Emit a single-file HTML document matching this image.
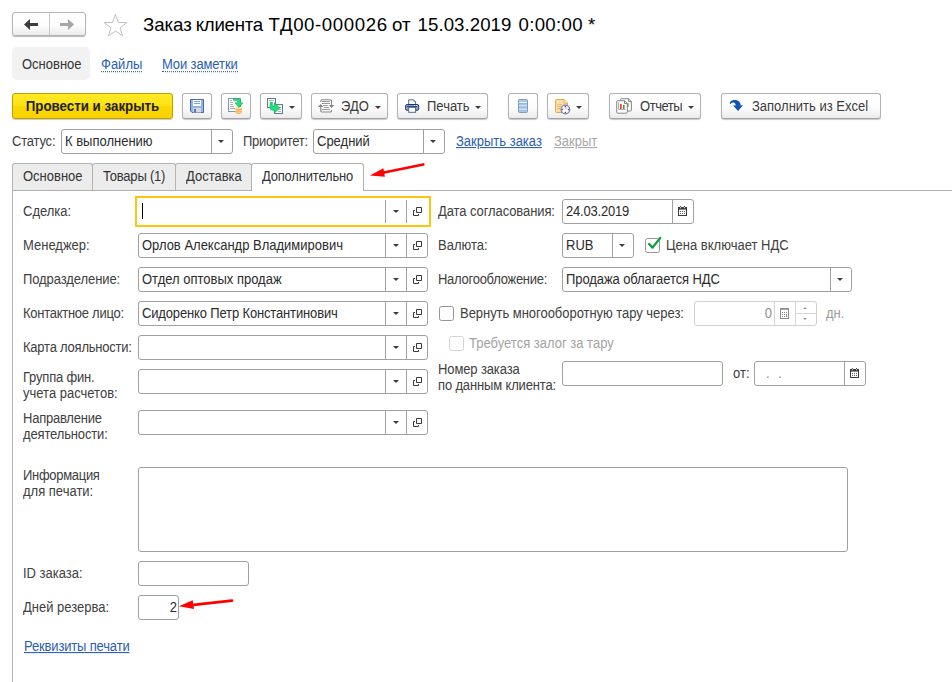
<!DOCTYPE html>
<html lang="ru"><head><meta charset="utf-8"><title>Заказ клиента</title>
<style>
html,body{margin:0;padding:0;background:#fff}
body{width:952px;height:682px;position:relative;overflow:hidden;font-family:"Liberation Sans",sans-serif;font-size:13px;color:#404040;}
.a{position:absolute;white-space:nowrap}
.t{position:absolute;white-space:nowrap;line-height:16px;height:16px;transform:scaleY(1.07);transform-origin:0 12.5px}
.btn{position:absolute;box-sizing:border-box;height:26px;top:93px;border:1px solid #b2b2b2;border-bottom-color:#a2a2a2;border-radius:3px;background:linear-gradient(#ffffff 0%,#fdfdfd 55%,#ebebeb 100%);box-shadow:0 1px 1px rgba(0,0,0,.22)}
.btn .t{top:5px;color:#3a3a3a}
.dd{position:absolute;width:0;height:0;border-left:3px solid transparent;border-right:3px solid transparent;border-top:3.5px solid #3c3c3c}
.inp{position:absolute;box-sizing:border-box;height:25px;border:1px solid #a0a0a0;border-radius:3px;background:#fff}
.inp .v{position:absolute;left:3px;top:4px;line-height:16px;white-space:nowrap;color:#2c2c2c;transform:scaleY(1.07);transform-origin:0 12.5px}
.inp .sep{position:absolute;top:0;bottom:0;width:1px;background:#a0a0a0}
.lnk{color:#2a5db0;text-decoration:underline}
.tab{position:absolute;box-sizing:border-box;top:163px;height:27px;border:1px solid #b5b5b5;border-bottom:none;border-radius:3px 3px 0 0;background:#ececec}
.tab .t{top:5px;left:10px;color:#333}

.inp.ref::before{content:"";position:absolute;left:246px;top:0;bottom:0;width:1px;background:#a0a0a0}
.inp.ref::after{content:"";position:absolute;left:267px;top:0;bottom:0;width:1px;background:#a0a0a0}
.cb{width:15px;height:15px;box-sizing:border-box;border:1px solid #969696;border-radius:2.5px;background:#fff}
.cb.dis{border-color:#d4d4d4}
.inp.dis{border-color:#d0d0d0}
.inp.dis .sep{background:#d6d6d6}
</style></head><body>

<!-- nav buttons -->
<div class="a" id="nav" style="left:12px;top:12px;width:74px;height:24px;box-sizing:border-box;border:1px solid #b4b4b4;border-radius:3px;background:linear-gradient(#fff,#fdfdfd 55%,#ececec);box-shadow:0 1px 1px rgba(0,0,0,.28)">
 <div class="a" style="left:36px;top:0;width:1px;height:22px;background:#c8c8c8"></div>
 <svg class="a" style="left:11px;top:6px" width="14" height="11" viewBox="0 0 14 11"><path d="M0 5.5 L6 0 V4 H14 V7 H6 V11Z" fill="#3c3c3c"/></svg>
 <svg class="a" style="left:47px;top:6px" width="14" height="11" viewBox="0 0 14 11"><path d="M14 5.5 L8 0 V4 H0 V7 H8 V11Z" fill="#a6a6a6"/></svg>
</div>
<svg class="a" id="star" style="left:103px;top:13px" width="25" height="24" viewBox="0 0 27 26"><path d="M13.5 1.5 L16.6 10.2 L25.8 10.4 L18.5 16 L21.1 24.8 L13.5 19.6 L5.9 24.8 L8.5 16 L1.2 10.4 L10.4 10.2Z" fill="#fff" stroke="#bdbdbd" stroke-width="1.05"/></svg>
<div class="a" id="title" style="left:0;top:14px;font-size:18.67px;line-height:22px;color:#000;height:22px;width:700px"><span class="a tw" id="tw0" style="left:142.9px;letter-spacing:0.00px">Заказ</span> <span class="a tw" id="tw1" style="left:195.8px;letter-spacing:-0.30px">клиента</span> <span class="a tw" id="tw2" style="left:268.6px;letter-spacing:0.58px">ТД00-000026</span> <span class="a tw" id="tw3" style="left:392.0px;letter-spacing:0.00px">от</span> <span class="a tw" id="tw4" style="left:417.6px;letter-spacing:0.05px">15.03.2019</span> <span class="a tw" id="tw5" style="left:518.6px;letter-spacing:0.28px">0:00:00</span> <span class="a tw" id="tw6" style="left:588.0px;letter-spacing:0.00px">*</span></div>

<!-- section links -->
<div class="a" style="left:12px;top:47px;width:78px;height:33px;background:#f2f2f2;border-radius:5px"></div>
<div class="t" id="s1" style="left:22px;top:57px;color:#333">Основное</div>
<div class="t" id="s2" style="left:101px;top:57px;color:#2a5db0;border-bottom:1px dotted #2a5db0;height:14px;line-height:15px">Файлы</div>
<div class="t" id="s3" style="letter-spacing:-0.12px;left:162px;top:57px;color:#2a5db0;border-bottom:1px dotted #2a5db0;height:14px;line-height:15px">Мои заметки</div>

<!-- toolbar -->
<div class="btn" id="b0" style="left:12px;width:161px;border-color:#bfa000;background:linear-gradient(#ffe924 0%,#ffe316 50%,#fbd900 52%,#f8d200 100%);"><div class="t" style="left:0;right:0;text-align:center;font-weight:bold;font-size:13.33px;color:#222">Провести и закрыть</div></div>
<div class="btn" id="b1" style="left:182px;width:30px"><svg class="a" style="left:7px;top:5px" width="14" height="14" viewBox="0 0 14 14"><path d="M0.5 0.5 H13.5 V13.5 H2 L0.5 12Z" fill="#8fb5e4" stroke="#4f66ad"/><rect x="3" y="1" width="8" height="6" fill="#fff"/><path d="M4 2.5h6M4 4.5h6" stroke="#7ba3d6"/><rect x="3" y="9" width="8" height="4.5" fill="#d9d9d9"/><rect x="4" y="10" width="2" height="3.5" fill="#4a78c0"/></svg></div>
<div class="btn" id="b2" style="left:221px;width:30px"><svg class="a" style="left:6px;top:4px" width="17" height="17" viewBox="0 0 17 17"><rect x="0.5" y="0.5" width="12" height="13" fill="#fff" stroke="#7a99b8"/><path d="M2 2.5h2M2 4.5h3M2 6.5h3M2 8.5h4M2 10.5h5" stroke="#a9b0b8"/><path d="M7.5 10 V14.6 C7.5 16.4 13.8 16.4 13.8 14.6 V10Z" fill="#f2a63a"/><ellipse cx="10.65" cy="10" rx="3.15" ry="1.2" fill="#fbe0a8"/><path d="M7.5 11.9 C7.5 13.2 13.8 13.2 13.8 11.9 M7.5 13.6 C7.5 14.9 13.8 14.9 13.8 13.6" fill="none" stroke="#fde6b8" stroke-width="0.9"/><path d="M5.5 0.5 H10 C12.2 0.5 13 2.2 13 4.9 H15 L10.8 9.4 L7 4.7 H9.7 C9.7 3.2 9.4 2.6 8.4 2.6 H5.5 Z" fill="#22de7c" stroke="#0a9a40" stroke-width="0.5" stroke-linejoin="round"/></svg></div>
<div class="btn" id="b3" style="left:260px;width:42px"><svg class="a" style="left:5px;top:3px" width="18" height="18" viewBox="266 97 18 18"><rect x="267.5" y="98.5" width="8" height="9" fill="#fff" stroke="#607a8e"/><path d="M269 100.5h4.7" stroke="#b0b6bc"/><rect x="274.5" y="104.5" width="8" height="9" fill="#fff" stroke="#607a8e"/><path d="M278 107.5h3M278.5 109.5h2.5M278 111.5h3" stroke="#b0b6bc"/><path d="M270 102.2 H272.4 V106 H274.3 V102.6 L279.8 108 L274.3 113.2 V110.2 H272.5 C271 110.2 270 109.2 270 107.7 Z" fill="#22de7c" stroke="#0a9a40" stroke-width="0.5" stroke-linejoin="round"/></svg><div class="dd" style="left:28px;top:12px"></div></div>
<div class="btn" id="b4" style="left:311px;width:77px"><svg class="a" style="left:5px;top:4px" width="18" height="16" viewBox="317 98 18 16"><g fill="none" stroke="#858585" stroke-width="1.1"><path d="M320.8 102 V101 a1.2 1.2 0 0 1 1.2 -1.2 H330.3 a1.2 1.2 0 0 1 1.2 1.2 V105.4"/><path d="M320.8 106.5 V110.8 a1.2 1.2 0 0 0 1.2 1.2 H330.3 a1.2 1.2 0 0 0 1.2 -1.2 V110"/></g><path d="M322 101.5h8M322 103.5h8M323.3 105.5h4.4M323.8 107.5h5.2M322 109.5h8" stroke="#8c8c8c" stroke-width="0.9"/><path d="M317.9 106.9 L320.7 103.9 L323.4 106.9Z M328.9 105.1 H334.3 L331.6 108.1Z" fill="#858585"/></svg><div class="t" style="left:29px">ЭДО</div><div class="dd" style="left:63px;top:12px"></div></div>
<div class="btn" id="b5" style="left:397px;width:91px"><svg class="a" style="left:6px;top:4px" width="17" height="16" viewBox="404 98 17 16"><path d="M408.7 104.5 V99.8 H413.5 L415.6 101.9 V104.5Z" fill="#fff" stroke="#4f6e84"/><path d="M413.5 99.8 V101.9 H415.6Z" fill="#6f8ea4"/><rect x="405.6" y="104.5" width="13.1" height="5.8" rx="1.6" fill="#7fabd9" stroke="#2b2a6c"/><path d="M407 106.6h10" stroke="#2b2a6c" stroke-width="1"/><rect x="414" y="105.1" width="1" height="0.9" fill="#fff"/><rect x="416" y="105.1" width="1" height="0.9" fill="#fff"/><rect x="408.7" y="107.3" width="6.9" height="5" fill="#fff" stroke="#4f6e84"/></svg><div class="t" style="left:29px">Печать</div><div class="dd" style="left:77px;top:12px"></div></div>
<div class="btn" id="b6" style="left:508px;width:30px"><svg class="a" style="left:9px;top:5px" width="10" height="14" viewBox="0 0 10 14"><rect x="0.5" y="0.5" width="9" height="13" rx="1" fill="#a9c8e6" stroke="#7d9dc0"/><path d="M1 3.6h8M1 7h8M1 10.4h8" stroke="#eef5fb" stroke-width="1"/><path d="M1 4.5h8M1 7.9h8M1 11.3h8" stroke="#8fb2d6" stroke-width="0.8"/></svg></div>
<div class="btn" id="b7" style="left:547px;width:42px"><svg class="a" style="left:7px;top:5px" width="17" height="17" viewBox="0 0 17 17"><path d="M0.5 1.5 C0.5 1 1 0.5 1.5 0.5 H9 L12.5 4 V13.5 H1.5 C1 13.5 0.5 13 0.5 12.5Z" fill="#fbdfa6" stroke="#e3a84a"/><path d="M9 0.5 V4 H12.5" fill="#fdf0d4" stroke="#e3a84a"/><path d="M2.5 5.5h1.2M4.5 5.5h2M2.5 7.5h1M4.3 7.5h1.5M2.5 9.5h2.5" stroke="#eaa24a" stroke-width="0.9"/><circle cx="10.4" cy="10.5" r="4.3" fill="#f7fafd" stroke="#5a8ac0" stroke-width="1.2"/><path d="M10.4 10.5 L10.4 8 L12.6 8.8Z" fill="#a9c6e6"/><circle cx="10.4" cy="7.4" r="0.75" fill="#f01818"/><circle cx="10.4" cy="13.6" r="0.75" fill="#f01818"/><circle cx="7.3" cy="10.5" r="0.75" fill="#f01818"/><circle cx="13.5" cy="10.5" r="0.75" fill="#f01818"/></svg><div class="dd" style="left:28px;top:12px"></div></div>
<div class="btn" id="b8" style="left:609px;width:92px"><svg class="a" style="left:6px;top:4px" width="17" height="17" viewBox="616 98 17 17"><path d="M621.5 98.7 H628.5 L631.4 101.6 V110 a1 1 0 0 1 -1 1 H621.5 a1 1 0 0 1 -1 -1 V99.7 a1 1 0 0 1 1 -1Z" fill="#fff" stroke="#858585"/><path d="M628.5 98.7 V101.6 H631.4" fill="none" stroke="#858585"/><rect x="627" y="103" width="1.4" height="4" fill="#2e9e4a"/><rect x="628.4" y="103.5" width="0.7" height="3.5" fill="#b5b060"/><path d="M617.7 100.7 H624.5 L627.3 103.5 V112.2 a1 1 0 0 1 -1 1 H617.7 a1 1 0 0 1 -1 -1 V101.7 a1 1 0 0 1 1 -1Z" fill="#fff" stroke="#858585"/><path d="M624.5 100.7 V103.5 H627.3" fill="none" stroke="#858585"/><path d="M618.5 102.3 V109.5 H625.5" fill="none" stroke="#9a9a9a" stroke-width="0.8"/><rect x="620" y="104" width="1.8" height="5" fill="#ff4040"/><rect x="623" y="105" width="1.5" height="4" fill="#2e9e4a"/><rect x="624.5" y="105.3" width="0.6" height="3.7" fill="#b5b060"/></svg><div class="t" style="letter-spacing:-0.45px;left:30px">Отчеты</div><div class="dd" style="left:78px;top:12px"></div></div>
<div class="btn" id="b9" style="left:721px;width:160px"><svg class="a" style="left:6px;top:4px" width="16" height="15" viewBox="728 98 16 15"><path d="M729.9 104 C729.6 101.4 732 100 735 100 C738.6 100 740.6 102.5 740.7 105.4 L742.9 105.3 L738.1 111.1 L733 105.6 L735.7 105.5 C735.6 103.5 734.6 102.5 733.1 102.5 C731.6 102.5 730.9 103.3 730.7 104.1 Z" fill="#0d55b8"/></svg><div class="t" style="left:30px">Заполнить из Excel</div></div>

<!-- status row -->
<div class="t" style="letter-spacing:-0.2px;left:12px;top:134px">Статус:</div>
<div class="inp" id="i_st" style="left:61px;top:129px;width:172px"><div class="v">К выполнению</div><div class="sep" style="left:149px"></div><div class="dd" style="left:156px;top:10px"></div></div>
<div class="t" style="letter-spacing:-0.3px;left:243px;top:134px">Приоритет:</div>
<div class="inp" id="i_pr" style="left:313px;top:129px;width:132px"><div class="v">Средний</div><div class="sep" style="left:109px"></div><div class="dd" style="left:116px;top:10px"></div></div>
<div class="t lnk" style="left:456px;top:134px">Закрыть заказ</div>
<div class="t" style="left:554px;top:134px;color:#a8a8a8;text-decoration:underline">Закрыт</div>

<!-- tabs -->
<div class="a" style="left:12px;top:190px;width:940px;height:1px;background:#b0b0b0"></div>
<div class="a" style="left:12px;top:190px;width:1px;height:492px;background:#b0b0b0"></div>
<div class="tab" id="t1" style="left:12px;width:81px"><div class="t">Основное</div></div>
<div class="tab" id="t2" style="left:92px;width:84px"><div class="t" style="letter-spacing:-0.2px">Товары (1)</div></div>
<div class="tab" id="t3" style="left:175px;width:77px"><div class="t">Доставка</div></div>
<div class="tab" id="t4" style="left:251px;width:113px;background:#fff;height:28px;border-color:#b0b0b0"><div class="t" style="letter-spacing:-0.2px">Дополнительно</div></div>

<!-- red arrows -->
<svg class="a" style="left:360px;top:155px" width="80" height="40" viewBox="360 155 80 40"><path d="M423.3 164.4 L384 172.6" stroke="#f00" stroke-width="2.6" stroke-linecap="round" fill="none"/><path d="M369.9 175.4 L383.4 168.2 L384.9 176.8Z" fill="#f00"/></svg>
<svg class="a" style="left:175px;top:590px" width="70" height="30" viewBox="175 590 70 30"><path d="M232 600.6 L193.5 604.8" stroke="#f00" stroke-width="2.8" stroke-linecap="round" fill="none"/><path d="M179 606.3 L192.7 600.3 L194 609.1Z" fill="#f00"/></svg>

<!-- left column -->
<div class="t" id="l1" style="left:23px;top:204px">Сделка:</div>
<div class="a" id="f1" style="left:135px;top:196px;width:296px;height:31px;box-sizing:border-box;border:2px solid #fbc70e;background:#fff">
  <div class="a" style="left:5px;top:5px;width:1px;height:16px;background:#000"></div>
  <div class="a" style="left:248px;top:2px;width:1px;height:23px;background:#a0a0a0"></div>
  <div class="a" style="left:269px;top:2px;width:1px;height:23px;background:#a0a0a0"></div>
  <div class="dd" style="left:256px;top:12px"></div>
  <svg class="a op" style="left:276px;top:9px" width="9" height="9" viewBox="0 0 9 9"><path d="M3.5 0.5 H8.5 V5.5 H3.5Z M2 3.5 H0.5 V8.5 H5.5 V7" fill="none" stroke="#3a3a3a" stroke-width="1"/></svg>
</div>

<div class="t" id="l2" style="left:23px;top:238px">Менеджер:</div>
<div class="inp ref" id="f2" style="left:138px;top:233px;width:290px"><div class="dd" style="left:254px;top:10px"></div><svg class="a op" style="left:274px;top:7px" width="9" height="9" viewBox="0 0 9 9"><path d="M3.5 0.5 H8.5 V5.5 H3.5Z M2 3.5 H0.5 V8.5 H5.5 V7" fill="none" stroke="#3a3a3a" stroke-width="1"/></svg><div class="v">Орлов Александр Владимирович</div></div>
<div class="t" id="l3" style="letter-spacing:-0.09px;left:23px;top:272px">Подразделение:</div>
<div class="inp ref" id="f3" style="left:138px;top:267px;width:290px"><div class="dd" style="left:254px;top:10px"></div><svg class="a op" style="left:274px;top:7px" width="9" height="9" viewBox="0 0 9 9"><path d="M3.5 0.5 H8.5 V5.5 H3.5Z M2 3.5 H0.5 V8.5 H5.5 V7" fill="none" stroke="#3a3a3a" stroke-width="1"/></svg><div class="v">Отдел оптовых продаж</div></div>
<div class="t" id="l4" style="letter-spacing:-0.27px;left:23px;top:306px">Контактное лицо:</div>
<div class="inp ref" id="f4" style="left:138px;top:301px;width:290px"><div class="dd" style="left:254px;top:10px"></div><svg class="a op" style="left:274px;top:7px" width="9" height="9" viewBox="0 0 9 9"><path d="M3.5 0.5 H8.5 V5.5 H3.5Z M2 3.5 H0.5 V8.5 H5.5 V7" fill="none" stroke="#3a3a3a" stroke-width="1"/></svg><div class="v" style="letter-spacing:-0.15px">Сидоренко Петр Константинович</div></div>
<div class="t" id="l5" style="letter-spacing:-0.22px;left:23px;top:340px">Карта лояльности:</div>
<div class="inp ref" id="f5" style="left:138px;top:335px;width:290px"><div class="dd" style="left:254px;top:10px"></div><svg class="a op" style="left:274px;top:7px" width="9" height="9" viewBox="0 0 9 9"><path d="M3.5 0.5 H8.5 V5.5 H3.5Z M2 3.5 H0.5 V8.5 H5.5 V7" fill="none" stroke="#3a3a3a" stroke-width="1"/></svg></div>
<div class="t" id="l6" style="letter-spacing:-0.2px;left:23px;top:370px">Группа фин.</div>
<div class="t" id="l6b" style="left:23px;top:386px">учета расчетов:</div>
<div class="inp ref" id="f6" style="left:138px;top:369px;width:290px"><div class="dd" style="left:254px;top:10px"></div><svg class="a op" style="left:274px;top:7px" width="9" height="9" viewBox="0 0 9 9"><path d="M3.5 0.5 H8.5 V5.5 H3.5Z M2 3.5 H0.5 V8.5 H5.5 V7" fill="none" stroke="#3a3a3a" stroke-width="1"/></svg></div>
<div class="t" id="l7" style="letter-spacing:-0.23px;left:23px;top:411px">Направление</div>
<div class="t" id="l7b" style="letter-spacing:-0.15px;left:23px;top:427px">деятельности:</div>
<div class="inp ref" id="f7" style="left:138px;top:410px;width:290px"><div class="dd" style="left:254px;top:10px"></div><svg class="a op" style="left:274px;top:7px" width="9" height="9" viewBox="0 0 9 9"><path d="M3.5 0.5 H8.5 V5.5 H3.5Z M2 3.5 H0.5 V8.5 H5.5 V7" fill="none" stroke="#3a3a3a" stroke-width="1"/></svg></div>

<div class="t" id="l8" style="letter-spacing:-0.3px;left:23px;top:468px">Информация</div>
<div class="t" id="l8b" style="left:23px;top:484px">для печати:</div>
<div class="inp" id="f8" style="left:138px;top:467px;width:710px;height:85px"></div>
<div class="t" id="l9" style="left:23px;top:566px">ID заказа:</div>
<div class="inp" id="f9" style="left:138px;top:561px;width:111px"></div>
<div class="t" id="l10" style="left:23px;top:600px">Дней резерва:</div>
<div class="inp" id="f10" style="left:138px;top:595px;width:41px"><div class="v" style="left:auto;right:1px">2</div></div>
<div class="t lnk" id="l11" style="letter-spacing:-0.16px;left:24px;top:639px">Реквизиты печати</div>

<!-- right column -->
<div class="t" id="r1" style="letter-spacing:-0.09px;left:438px;top:204px">Дата согласования:</div>
<div class="inp" id="g1" style="left:562px;top:199px;width:132px"><div class="v" style="letter-spacing:-0.2px">24.03.2019</div><div class="sep" style="left:109px"></div>
  <svg class="a cal" style="left:115px;top:6px" width="9" height="10" viewBox="0 0 9 10"><rect x="0.5" y="1.5" width="8" height="8" fill="#fff" stroke="#3a3a3a"/><rect x="0" y="1" width="9" height="2.6" fill="#3a3a3a"/><rect x="2" y="0" width="1" height="1.2" fill="#3a3a3a"/><rect x="6" y="0" width="1" height="1.2" fill="#3a3a3a"/><rect x="2" y="1.2" width="1" height="1" fill="#fff"/><rect x="6" y="1.2" width="1" height="1" fill="#fff"/><g fill="#3a3a3a"><circle cx="2.5" cy="5.5" r="0.55"/><circle cx="4.5" cy="5.5" r="0.55"/><circle cx="6.5" cy="5.5" r="0.55"/><circle cx="2.5" cy="7.5" r="0.55"/><circle cx="4.5" cy="7.5" r="0.55"/><circle cx="6.5" cy="7.5" r="0.55"/></g></svg></div>
<div class="t" id="r2" style="left:438px;top:238px">Валюта:</div>
<div class="inp" id="g2" style="left:562px;top:233px;width:72px"><div class="v">RUB</div><div class="sep" style="left:49px"></div><div class="dd" style="left:56px;top:10px"></div></div>
<div class="a cb" id="c1" style="left:645px;top:238px"></div>
<svg class="a" style="left:645px;top:235px" width="18" height="16" viewBox="645 235 18 16"><path d="M649.1 244 L652.5 247.6 L660.2 238" fill="none" stroke="#109c40" stroke-width="2.3" stroke-linecap="round" stroke-linejoin="round"/></svg>
<div class="t" id="r2b" style="left:666px;top:238px">Цена включает НДС</div>
<div class="t" id="r3" style="letter-spacing:-0.27px;left:438px;top:272px">Налогообложение:</div>
<div class="inp" id="g3" style="left:562px;top:267px;width:290px"><div class="v" style="letter-spacing:-0.09px">Продажа облагается НДС</div><div class="sep" style="left:267px"></div><div class="dd" style="left:274px;top:10px"></div></div>
<div class="a cb" id="c2" style="left:439px;top:306px"></div>
<div class="t" id="r4" style="letter-spacing:-0.04px;left:460px;top:306px">Вернуть многооборотную тару через:</div>
<div class="inp dis" id="g4" style="left:694px;top:301px;width:123px"><div class="v" style="left:auto;right:44px;color:#8e8e8e">0</div><div class="sep" style="left:79px"></div><div class="sep" style="left:100px"></div><div class="a" style="left:101px;top:11px;width:21px;height:1px;background:#d6d6d6"></div>
  <svg class="a" style="left:85px;top:6px" width="9" height="11" viewBox="0 0 9 11"><rect x="0.5" y="0.5" width="8" height="10" fill="#fff" stroke="#8e8e8e"/><rect x="0" y="0" width="9" height="1.8" fill="#8e8e8e"/><g fill="#8e8e8e"><rect x="2" y="4" width="1" height="1"/><rect x="4" y="4" width="1" height="1"/><rect x="6" y="4" width="1" height="1"/><rect x="2" y="6" width="1" height="1"/><rect x="4" y="6" width="1" height="1"/><rect x="2" y="8" width="1" height="1"/><rect x="4" y="8" width="1" height="1"/><rect x="6" y="6" width="1" height="3"/></g></svg>
  <div class="a" style="left:108px;top:5px;width:0;height:0;border-left:2px solid transparent;border-right:2px solid transparent;border-bottom:2.5px solid #9a9a9a"></div>
  <div class="a" style="left:108px;top:16px;width:0;height:0;border-left:2px solid transparent;border-right:2px solid transparent;border-top:2.5px solid #9a9a9a"></div>
</div>
<div class="t" id="r4b" style="left:826px;top:306px;color:#9a9a9a">дн.</div>
<div class="a cb dis" id="c3" style="left:449px;top:336px"></div>
<div class="t" id="r5" style="left:469px;top:336px;color:#a3a3a3">Требуется залог за тару</div>
<div class="t" id="r6" style="left:438px;top:362px;letter-spacing:-0.12px">Номер заказа</div>
<div class="t" id="r6b" style="left:438px;top:378px;letter-spacing:-0.15px">по данным клиента:</div>
<div class="inp" id="g6" style="left:562px;top:361px;width:161px"></div>
<div class="t" id="r7" style="left:733px;top:366px">от:</div>
<div class="inp" id="g7" style="left:754px;top:361px;width:112px"><div class="v" style="left:11px;letter-spacing:8.6px;color:#8a8a8a">..</div><div class="sep" style="left:89px"></div>
  <svg class="a cal" style="left:95px;top:6px" width="9" height="10" viewBox="0 0 9 10"><rect x="0.5" y="1.5" width="8" height="8" fill="#fff" stroke="#3a3a3a"/><rect x="0" y="1" width="9" height="2.6" fill="#3a3a3a"/><rect x="2" y="0" width="1" height="1.2" fill="#3a3a3a"/><rect x="6" y="0" width="1" height="1.2" fill="#3a3a3a"/><rect x="2" y="1.2" width="1" height="1" fill="#fff"/><rect x="6" y="1.2" width="1" height="1" fill="#fff"/><g fill="#3a3a3a"><circle cx="2.5" cy="5.5" r="0.55"/><circle cx="4.5" cy="5.5" r="0.55"/><circle cx="6.5" cy="5.5" r="0.55"/><circle cx="2.5" cy="7.5" r="0.55"/><circle cx="4.5" cy="7.5" r="0.55"/><circle cx="6.5" cy="7.5" r="0.55"/></g></svg></div>

</body></html>
